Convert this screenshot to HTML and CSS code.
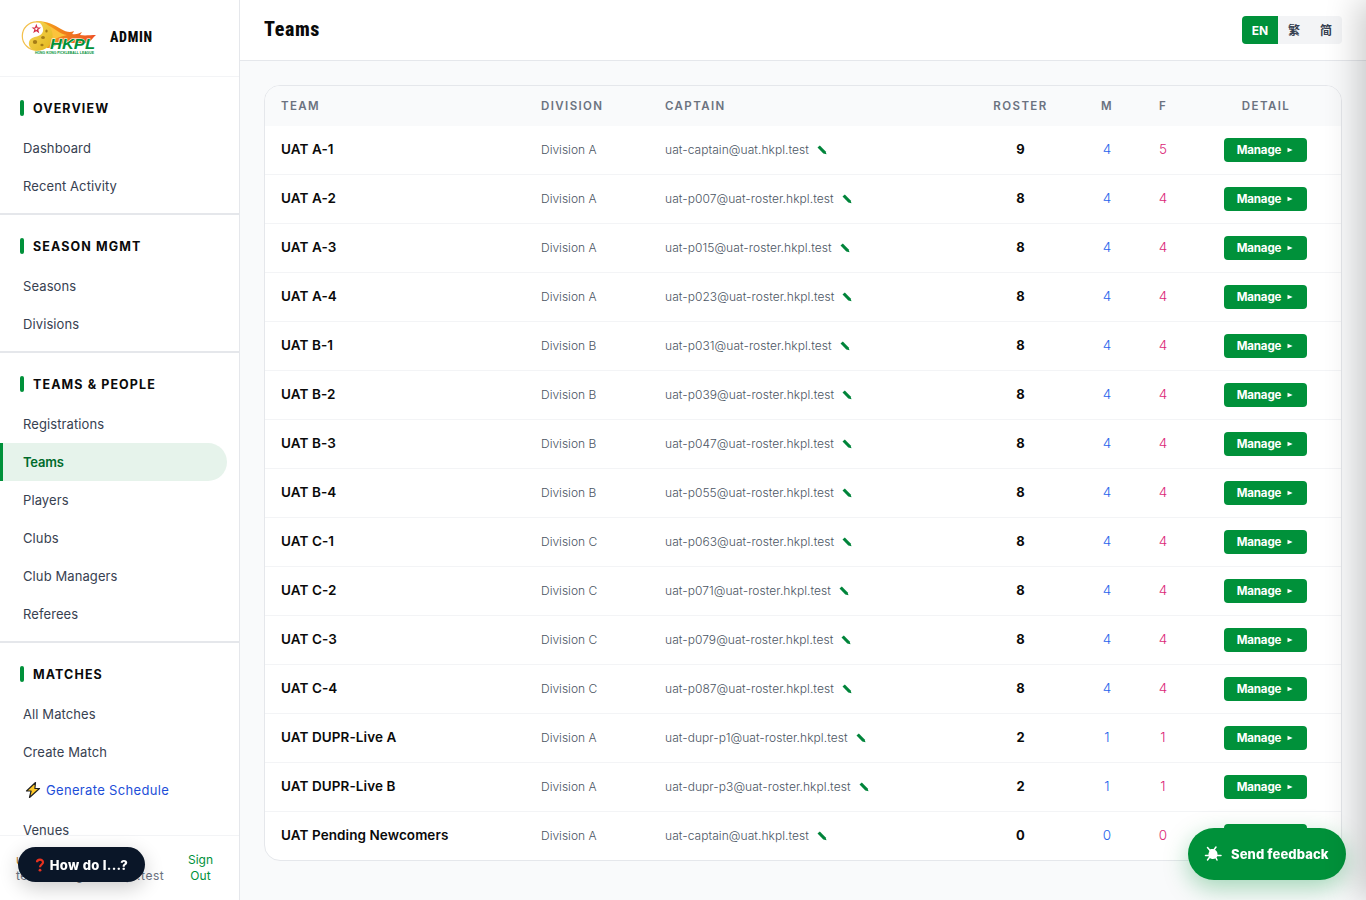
FILE: index.html
```html
<!DOCTYPE html>
<html lang="en">
<head>
    <meta charset="UTF-8">
    <meta name="viewport" content="width=device-width, initial-scale=1.0">
    <title>Teams - HKPL Admin</title>
    <link rel="stylesheet" href="styles.css">
</head>
<body>
    <aside class="sidebar">
        <div class="brand">
            <svg class="logo" viewBox="0 0 76 36" width="76" height="36">
                <defs>
                    <linearGradient id="flame" x1="0" y1="0" x2="1" y2="0">
                        <stop offset="0" stop-color="#f6b01b"/>
                        <stop offset=".45" stop-color="#f0801c"/>
                        <stop offset="1" stop-color="#ee5125"/>
                    </linearGradient>
                    <linearGradient id="ball" x1="0" y1="0" x2="1" y2="1">
                        <stop offset="0" stop-color="#f8d85a"/>
                        <stop offset="1" stop-color="#e2b61c"/>
                    </linearGradient>
                </defs>
                <path fill="url(#flame)" d="M15 1C27 1 33 5 40 9c5 3 9 4 13 2-1 2-1 2-2 3 5 1 7-1 10-2l-2 3c5 1 10 0 16 0-3 2-5 7-10 8H46c-7 1-11 1-15 5l-5 0z"/>
                <path fill="#fbc33c" d="M26 5c8 3 12 9 20 10-7 2-12 2-16 9z"/>
                <circle cx="15.500" cy="16" r="14.200" fill="#fff" stroke="#f3c04c" stroke-width="1.200"/>
                <path fill="url(#ball)" d="M17 1.300a14.600 14.600 0 0 1 0 29.300C11 31 7 27 8 22c1-4 5-5 8-5.500 7-1.500 9-9 1-15.200z"/>
                <g fill="#a57c17">
                    <ellipse cx="22" cy="17.500" rx="1.900" ry="1.500"/>
                    <ellipse cx="14" cy="22" rx="2.200" ry="1.900"/>
                    <ellipse cx="25.500" cy="11" rx="1.200" ry="1.600"/>
                    <ellipse cx="21" cy="25" rx="1.600" ry="1.200"/>
                </g>
                <path fill="none" stroke="#d42c42" stroke-width="1.100" d="M15.300 5.500l.8 2.300 2.500.1-2 1.600.7 2.400-2-1.400-2.100 1.300.8-2.400-1.900-1.500 2.400-.1z"/>
                <text class="logo-name" x="29" y="28.500" textLength="45" lengthAdjust="spacingAndGlyphs">HKPL</text>
                <text class="logo-sub" x="14" y="34" textLength="59" lengthAdjust="spacingAndGlyphs">HONG KONG PICKLEBALL LEAGUE</text>
            </svg>
            <span class="brand-text">ADMIN</span>
        </div>
        <nav>
            <div class="section">
                <h2>OVERVIEW</h2>
                <a>Dashboard</a>
                <a>Recent Activity</a>
            </div>
            <div class="section">
                <h2>SEASON MGMT</h2>
                <a>Seasons</a>
                <a>Divisions</a>
            </div>
            <div class="section">
                <h2>TEAMS &amp; PEOPLE</h2>
                <a>Registrations</a>
                <a class="active">Teams</a>
                <a>Players</a>
                <a>Clubs</a>
                <a>Club Managers</a>
                <a>Referees</a>
            </div>
            <div class="section">
                <h2>MATCHES</h2>
                <a>All Matches</a>
                <a>Create Match</a>
                <a class="generate">
                    <svg viewBox="0 0 18 18" width="18" height="18"><path d="M11.500 1.500L2.500 10h4.600L5.500 16.500 15.500 7.500h-4.600z" fill="#ffc928" stroke="#222" stroke-width="1.200" stroke-linejoin="round"/></svg>
                    <span>Generate Schedule</span>
                </a>
                <a>Venues</a>
            </div>
        </nav>
        <div class="user">
            <div class="user-info">
                <div class="user-role">uat</div>
                <div>teams.league@hkpl.test</div>
            </div>
            <a class="sign-out">Sign<br>Out</a>
        </div>
    </aside>

    <main>
        <header class="topbar">
            <h1>Teams</h1>
            <div class="lang">
                <button class="on">EN</button>
                <button>繁</button>
                <button>简</button>
            </div>
        </header>
        <div class="card">
            <table>
                <colgroup>
                    <col class="c-team"><col class="c-division"><col class="c-captain"><col class="c-roster"><col class="c-count"><col class="c-count"><col>
                </colgroup>
                <thead>
                    <tr>
                        <th>TEAM</th>
                        <th>DIVISION</th>
                        <th>CAPTAIN</th>
                        <th class="mid">ROSTER</th>
                        <th class="mid">M</th>
                        <th class="mid">F</th>
                        <th class="mid">DETAIL</th>
                    </tr>
                </thead>
                <tbody id="teams"></tbody>
            </table>
        </div>
    </main>

    <button class="help">
        <svg viewBox="0 0 10 14" width="10" height="14"><path d="M2 4.300C2 .8 8 .8 8 4.200 8 6.500 5 6.500 5 9.300" fill="none" stroke="#e8321f" stroke-width="2.200"/><circle cx="5" cy="12.200" r="1.400" fill="#e8321f"/></svg>
        <span>How do I...?</span>
    </button>
    <button class="feedback">
        <svg viewBox="0 0 18 18" width="18" height="18">
            <path d="M6 4.500C10 3 14 6 13.500 10c-.3 3-3 4.500-5.500 4-3-.7-4-3-3.500-5.500z" fill="#fff"/>
            <path d="M3.500 2.500l3 3.500M12 2L9.500 5.500M1.500 10.500H6M12 10.500h5M3.500 15l3-4M11.500 12l1.500 3" stroke="#fff" stroke-width="1.500" stroke-linecap="round"/>
        </svg>
        <span>Send feedback</span>
    </button>
    <div class="drawer"></div>

    <script>
        const teams = [
            ["UAT A-1", "A", "uat-captain@uat", 9, 4, 5],
            ["UAT A-2", "A", "uat-p007@uat-roster", 8, 4, 4],
            ["UAT A-3", "A", "uat-p015@uat-roster", 8, 4, 4],
            ["UAT A-4", "A", "uat-p023@uat-roster", 8, 4, 4],
            ["UAT B-1", "B", "uat-p031@uat-roster", 8, 4, 4],
            ["UAT B-2", "B", "uat-p039@uat-roster", 8, 4, 4],
            ["UAT B-3", "B", "uat-p047@uat-roster", 8, 4, 4],
            ["UAT B-4", "B", "uat-p055@uat-roster", 8, 4, 4],
            ["UAT C-1", "C", "uat-p063@uat-roster", 8, 4, 4],
            ["UAT C-2", "C", "uat-p071@uat-roster", 8, 4, 4],
            ["UAT C-3", "C", "uat-p079@uat-roster", 8, 4, 4],
            ["UAT C-4", "C", "uat-p087@uat-roster", 8, 4, 4],
            ["UAT DUPR-Live A", "A", "uat-dupr-p1@uat-roster", 2, 1, 1],
            ["UAT DUPR-Live B", "A", "uat-dupr-p3@uat-roster", 2, 1, 1],
            ["UAT Pending Newcomers", "A", "uat-captain@uat", 0, 0, 0]
        ];

        const pencil = `<svg class="pencil" viewBox="0 0 10 10" width="10" height="10"><path d="M.5 2.500L2.800.5 8.500 6.300 9.500 9.300 6.300 8.500z" fill="#00843a"/></svg>`;

        document.getElementById("teams").innerHTML = teams.map(([name, division, captain, roster, m, f]) => `
            <tr>
                <td class="name">${name}</td>
                <td class="division">Division ${division}</td>
                <td class="captain"><span>${captain}.hkpl.test</span>${pencil}</td>
                <td class="mid roster">${roster}</td>
                <td class="mid male">${m}</td>
                <td class="mid female">${f}</td>
                <td class="mid"><button class="manage">Manage<svg viewBox="0 0 6 6" width="6" height="6"><path d="M.5.700L5.700 3 .5 5.300z" fill="#fff"/></svg></button></td>
            </tr>`).join("");
    </script>
</body>
</html>
```
FILE: styles.css
```css
* {
    box-sizing: border-box;
}
body {
    margin: 0;
    height: 100vh;
    display: flex;
    overflow: hidden;
    background: #f9fafb;
    color: #0a0a0a;
    font-family: Inter, "Noto Sans CJK TC", sans-serif;
    font-size: 14px;
}
button {
    border: none;
    font-family: inherit;
    cursor: pointer;
}
.sidebar {
    width: 240px;
    height: 900px;
    flex: none;
    display: flex;
    flex-direction: column;
    background: #fff;
    border-right: 1px solid #e5e7eb;
}
.brand {
    height: 77px;
    flex: none;
    display: flex;
    align-items: center;
    gap: 13px;
    padding: 0 20px 0 21px;
    border-bottom: 1px solid #f3f4f6;
}
.logo {
    overflow: visible;
}
.logo-name {
    font: italic 900 15px "Liberation Sans", sans-serif;
    fill: #00913a;
    stroke: #fff;
    stroke-width: 1px;
    paint-order: stroke;
}
.logo-sub {
    font: bold 4px "Liberation Sans", sans-serif;
    fill: #00913a;
}
.brand-text {
    font-family: Roboto, sans-serif;
    font-stretch: 75%;
    font-weight: 800;
    font-size: 14px;
    letter-spacing: 0.7px;
    margin-top: -2px;
}
nav {
    flex: 1;
    min-height: 0;
    overflow: hidden;
}
.section {
    padding: 20px 0 8px;
    border-bottom: 2px solid #e5e7eb;
}
.section h2 {
    display: flex;
    align-items: center;
    gap: 9px;
    height: 22px;
    margin: 0 0 10px 20px;
    font-size: 12.5px;
    font-weight: 700;
    letter-spacing: 1.1px;
}
.section h2::before {
    content: "";
    width: 4px;
    height: 16px;
    border-radius: 2px;
    background: #00913a;
}
.section a {
    display: flex;
    align-items: center;
    height: 38px;
    margin-right: 12px;
    padding-left: 20px;
    border-left: 3px solid transparent;
    color: #374151;
    font-size: 13px;
    letter-spacing: 0.1px;
}
.section a.active {
    background: #e6f3eb;
    border-color: #00913a;
    border-radius: 0 19px 19px 0;
    color: #006b2b;
    font-weight: 600;
    letter-spacing: -0.2px;
}
.section a.generate {
    height: 40px;
    gap: 4px;
    padding: 0 0 2px 21px;
    color: #1d4ed8;
    letter-spacing: 0.33px;
}
.user {
    height: 65px;
    flex: none;
    display: flex;
    align-items: center;
    justify-content: space-between;
    padding: 0 26px 0 16px;
    border-top: 1px solid #f3f4f6;
    color: #6b7280;
    font-size: 12px;
    line-height: 16px;
}
.user-info {
    width: 150px;
    white-space: nowrap;
    letter-spacing: 0.55px;
}
.user-role {
    color: #b7791f;
}
.sign-out {
    color: #00913a;
    text-align: center;
}
main {
    flex: 1;
}
.topbar {
    height: 61px;
    display: flex;
    align-items: center;
    justify-content: space-between;
    padding: 0 24px;
    background: #fff;
    border-bottom: 1px solid #e5e7eb;
}
h1 {
    margin: 0;
    padding-bottom: 2px;
    font-family: Roboto, sans-serif;
    font-stretch: 85%;
    font-size: 20px;
    font-weight: 800;
    letter-spacing: 0.6px;
}
.lang {
    display: flex;
    height: 28px;
    border-radius: 4px;
    overflow: hidden;
    background: #f3f4f6;
}
.lang button {
    width: 32px;
    padding: 0 0 2px;
    background: none;
    color: #374151;
    font-size: 12px;
    font-weight: 700;
}
.lang .on {
    width: 36px;
    padding: 0;
    background: #00913a;
    color: #fff;
}
.card {
    margin: 24px;
    background: #fff;
    border: 1px solid #e5e7eb;
    border-radius: 16px;
    overflow: hidden;
}
table {
    width: 100%;
    table-layout: fixed;
    border-collapse: separate;
    border-spacing: 0;
}
.c-team {
    width: 260px;
}
.c-division {
    width: 124px;
}
.c-captain {
    width: 313px;
}
.c-roster {
    width: 117px;
}
.c-count {
    width: 56px;
}
th {
    height: 40px;
    padding: 0 16px;
    background: #f9fafb;
    color: #6b7280;
    font-size: 11.5px;
    font-weight: 600;
    letter-spacing: 1.4px;
    text-align: left;
}
td {
    height: 49px;
    padding: 0 16px 2px;
    border-bottom: 1px solid #f3f4f6;
    white-space: nowrap;
}
tbody tr:last-child td {
    height: 48px;
    border-bottom: none;
}
th.mid,
td.mid {
    padding-left: 0;
    padding-right: 0;
    text-align: center;
}
td.mid:last-child {
    padding-bottom: 0;
    padding-right: 2px;
}
.name {
    font-size: 13.5px;
    font-weight: 600;
    letter-spacing: 0.08px;
}
.division,
.captain {
    padding-bottom: 1px;
    color: #4b5563;
    font-size: 12px;
    font-weight: 300;
}
.captain span {
    letter-spacing: 0.06px;
}
.pencil {
    margin-left: 8px;
    vertical-align: -1px;
}
.roster {
    font-size: 13px;
    font-weight: 700;
}
.male {
    color: #2563eb;
    font-size: 13.5px;
    font-weight: 300;
}
.female {
    color: #db2777;
    font-size: 13.5px;
    font-weight: 300;
}
.manage {
    display: inline-flex;
    align-items: center;
    justify-content: center;
    gap: 6px;
    width: 83px;
    height: 24px;
    padding: 0;
    border-radius: 4px;
    background: #00913a;
    color: #fff;
    font-size: 11.5px;
    font-weight: 700;
    letter-spacing: -0.1px;
    vertical-align: middle;
}
.help {
    position: fixed;
    left: 18px;
    bottom: 18px;
    display: flex;
    align-items: center;
    justify-content: center;
    gap: 5px;
    width: 127px;
    height: 35px;
    padding: 0;
    border-radius: 18px;
    background: #0a1628;
    color: #fff;
    font-size: 13px;
    font-weight: 800;
    letter-spacing: 0.3px;
    box-shadow: 0 6px 20px rgba(0, 0, 0, 0.2);
}
.feedback {
    position: fixed;
    right: 20px;
    bottom: 20px;
    display: flex;
    align-items: center;
    gap: 9px;
    width: 158px;
    height: 52px;
    padding: 0 0 0 16px;
    border-radius: 26px;
    background: #00913a;
    color: #fff;
    font-size: 13px;
    font-weight: 800;
    letter-spacing: 0.1px;
    white-space: nowrap;
    box-shadow: 0 8px 24px rgba(0, 145, 58, 0.35);
}
/* closed drawer, only its shadow reaches the page */
.drawer {
    position: fixed;
    left: 100%;
    top: 0;
    width: 400px;
    height: 100vh;
    box-shadow: -8px 0 32px rgba(0, 0, 0, 0.2);
}
```
